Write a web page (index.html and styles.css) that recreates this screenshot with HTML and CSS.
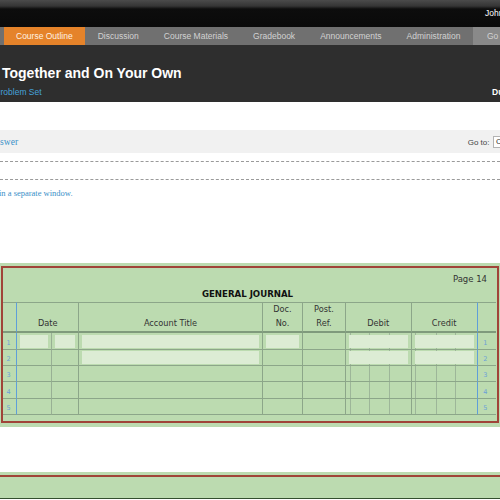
FILE: index.html
```html
<!DOCTYPE html>
<html lang="en">
<head>
<meta charset="utf-8">
<title>Problem Set</title>
<link rel="stylesheet" href="styles.css">
</head>
<body>
<div class="topbar"><span class="user">John Doe</span></div>
<nav class="tabs">
  <span class="tab active">Course Outline</span>
  <span class="tab">Discussion</span>
  <span class="tab">Course Materials</span>
  <span class="tab">Gradebook</span>
  <span class="tab">Announcements</span>
  <span class="tab">Administration</span>
  <span class="tab more">Go</span>
</nav>
<header class="course-head">
  <h1>Together and On Your Own</h1>
  <div class="sub">
    <a class="ps-link">Problem Set</a>
    <span class="due">Due: Sep 14</span>
  </div>
</header>
<main class="content">
  <div class="toolbar">
    <a class="answer">Answer</a>
    <div class="goto"><span>Go to:</span><span class="select">Choose</span></div>
  </div>
  <hr class="dash">
  <hr class="dash second">
  <p class="note">in a separate window.</p>

  <section class="jwrap">
    <div class="journal">
      <div class="page-no">Page 14</div>
      <div class="jtitle">GENERAL JOURNAL</div>
      <div class="jt">
        <div class="h nl"></div>
        <div class="h date">Date</div>
        <div class="h">Account Title</div>
        <div class="h">Doc.<br>No.</div>
        <div class="h">Post.<br>Ref.</div>
        <div class="h">Debit</div>
        <div class="h cr">Credit</div>
        <div class="h nr"></div>

        <div class="c nl">1</div><div class="c dm"><div class="fld"></div></div><div class="c"><div class="fld"></div></div><div class="c"><div class="fld"></div></div><div class="c"><div class="fld"></div></div><div class="c"></div><div class="c db"><div class="fld"></div></div><div class="c cr"><div class="fld"></div></div><div class="c nr">1</div>

        <div class="c nl">2</div><div class="c dm"></div><div class="c"></div><div class="c"><div class="fld"></div></div><div class="c"></div><div class="c"></div><div class="c db"><div class="fld"></div></div><div class="c cr"><div class="fld"></div></div><div class="c nr">2</div>

        <div class="c nl">3</div><div class="c dm"></div><div class="c"></div><div class="c"></div><div class="c"></div><div class="c"></div><div class="c db"></div><div class="c cr"></div><div class="c nr">3</div>

        <div class="c nl">4</div><div class="c dm"></div><div class="c"></div><div class="c"></div><div class="c"></div><div class="c"></div><div class="c db"></div><div class="c cr"></div><div class="c nr">4</div>

        <div class="c nl">5</div><div class="c dm"></div><div class="c"></div><div class="c"></div><div class="c"></div><div class="c"></div><div class="c db"></div><div class="c cr"></div><div class="c nr">5</div>
      </div>
    </div>
  </section>

  <section class="jwrap next">
    <div class="journal">
      <div class="rule"></div>
    </div>
  </section>
</main>
</body>
</html>
```
FILE: styles.css
```css
* { box-sizing: border-box; }
html, body { margin: 0; overflow: hidden; }
body {
  width: 500px;
  height: 500px;
  background: #fff;
  font-family: "Liberation Sans", Arial, sans-serif;
}

/* top black bar */
.topbar {
  height: 27px;
  padding-top: 7.5px;
  display: flex;
  justify-content: flex-end;
  background: linear-gradient(#4b4b4b 0, #353535 6px, #0d0d0d 9px, #0a0a0a 100%);
}
.user {
  color: #fff;
  font-size: 8.5px;
  line-height: 10px;
  white-space: nowrap;
  margin-right: -21.4px;
}

/* tabs */
.tabs {
  display: flex;
  height: 18px;
  padding-left: 3.5px;
  background: #707070;
}
.tab {
  padding: 0 12.5px;
  font-size: 8.5px;
  line-height: 18px;
  color: #d2d2d2;
  white-space: nowrap;
}
.tab.active { background: #e5832a; color: #fff2e4; }
.tab.more { flex: 1; background: #898989; padding-left: 14px; }

/* course header */
.course-head {
  height: 57px;
  padding: 20px 0 0 2px;
  background: #2e2e2e;
  color: #fff;
}
.course-head h1 {
  margin: 0;
  font-size: 14px;
  line-height: 17px;
  font-weight: bold;
  white-space: nowrap;
}
.sub {
  display: flex;
  justify-content: space-between;
  margin-top: 4px;
  font-size: 8.5px;
  line-height: 12px;
  white-space: nowrap;
}
.ps-link { color: #45a3dc; margin-left: -7.2px; }
.due { color: #fff; font-weight: bold; margin-right: -40.7px; }

/* content */
.content { padding-top: 28px; }
.toolbar {
  height: 23px;
  display: flex;
  align-items: center;
  justify-content: space-between;
  background: #f1f1f1;
}
.answer {
  font-family: "Liberation Serif", "Times New Roman", serif;
  font-size: 9.5px;
  color: #3a90c8;
  margin-left: -11.5px;
}
.goto {
  display: flex;
  align-items: center;
  gap: 3.5px;
  margin-right: -38px;
  font-size: 8px;
  color: #444;
  padding-top: 1px;
}
.select {
  width: 45px;
  height: 12px;
  padding-left: 2px;
  border: 1px solid #b3b3b3;
  background: #fff;
  font-size: 8px;
  line-height: 10px;
  color: #333;
}
.dash {
  margin: 7.7px 0 0;
  border: 0;
  border-top: 1px dashed #9a9a9a;
  height: 0;
}
.dash.second { margin-top: 17px; }
.note {
  margin: 8.5px 0 0 -1px;
  font-family: "Liberation Serif", "Times New Roman", serif;
  font-size: 8.5px;
  line-height: 10px;
  color: #3a90c8;
}

/* journal */
.jwrap {
  margin-top: 64.5px;
  padding: 3px 1.5px 4px 1px;
  background: #bcdbb0;
}
.journal {
  border: 2px solid #a04438;
  padding: 6px 0 6px;
  font-family: "DejaVu Sans", Verdana, sans-serif;
  color: #333;
}
.page-no {
  text-align: right;
  padding-right: 9.5px;
  font-size: 8.5px;
  line-height: 11px;
}
.jtitle {
  margin: 4px 0 2.7px;
  padding: 0 18.8px 0 14.3px;
  text-align: center;
  font-weight: bold;
  font-size: 8.6px;
  line-height: 11px;
  color: #111;
}
.jt {
  display: grid;
  grid-template-columns: 14.3px 35px 27px 183.4px 40.6px 42.4px 66px 66px 18.8px;
  grid-template-rows: 31px repeat(5, 16.3px);
}
.h {
  display: flex;
  align-items: flex-end;
  justify-content: center;
  text-align: center;
  padding-bottom: 1px;
  font-size: 8.2px;
  line-height: 14px;
  color: #333;
  border-top: 1px solid #8ca689;
  border-bottom: 2px solid #7f9a7c;
  border-right: 1px solid #8ca689;
}
.h.date { grid-column: span 2; }
.h.nl, .c.nl, .h.cr, .c.cr { border-right-color: #5f9fd9; }
.h.nr, .c.nr { border-right: 0; }

.c {
  border-bottom: 1px solid #8ca689;
  border-right: 1px solid #8ca689;
}
.c.dm { border-right-color: #98b094; }
.c.nl, .c.nr {
  display: flex;
  align-items: flex-end;
  padding-bottom: 2px;
  font-size: 6.5px;
  line-height: 8px;
  color: #6da0d8;
}
.c.nl { padding-left: 3.5px; }
.c.nr { padding-left: 5.5px; }
.c.db {
  background:
    linear-gradient(#9db699, #9db699) 4px 0 / 1px 100% no-repeat,
    linear-gradient(#9db699, #9db699) 23.5px 0 / 1px 100% no-repeat,
    linear-gradient(#9db699, #9db699) 43px 0 / 1px 100% no-repeat;
}
.c.cr {
  background:
    linear-gradient(#9db699, #9db699) 3px 0 / 1px 100% no-repeat,
    linear-gradient(#9db699, #9db699) 24px 0 / 1px 100% no-repeat,
    linear-gradient(#9db699, #9db699) 43px 0 / 1px 100% no-repeat;
}
.fld {
  height: 13px;
  margin: 1.3px 3px 0;
  background: #dcecd4;
}

.jwrap.next { margin-top: 45.5px; padding: 3px 0 0; }
.jwrap.next .journal { border-width: 2px 0 0; padding: 21px 0 0; }
.rule { border-top: 1px solid #34502f; }
```
